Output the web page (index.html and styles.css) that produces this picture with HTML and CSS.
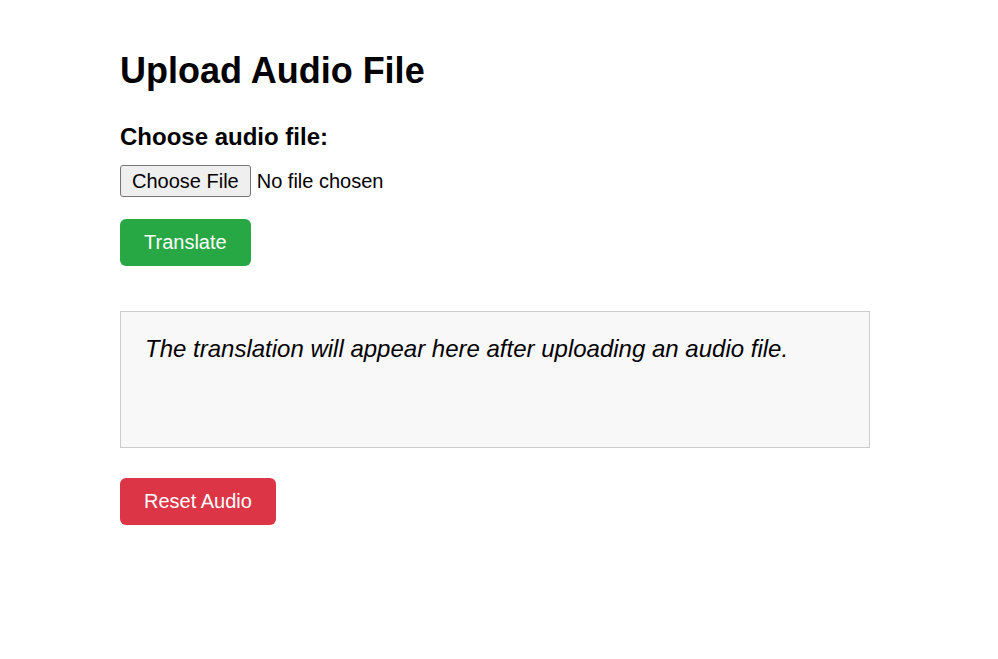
FILE: index.html
```html
<!DOCTYPE html>
<html lang="en">
<head>
<meta charset="utf-8">
<title>Upload Audio File</title>
<link rel="stylesheet" href="styles.css">
</head>
<body>
<main class="page">
  <h1 class="title">Upload Audio File</h1>
  <form class="upload-form">
    <label class="field-label" for="audio">Choose audio file:</label>
    <input class="file-input" type="file" id="audio" accept="audio/*">
    <button class="btn btn-translate" type="button">Translate</button>
  </form>
  <div class="result">
    <p class="result-text">The translation will appear here after uploading an audio file.</p>
  </div>
  <button class="btn btn-reset" type="button">Reset Audio</button>
</main>
</body>
</html>
```

FILE: styles.css
```css
html, body {
  margin: 0;
  padding: 0;
  background: #ffffff;
}

body {
  font-family: "Liberation Sans", Arial, sans-serif;
  font-size: 20px;
  color: #000;
}

.page {
  display: flex;
  flex-direction: column;
  align-items: flex-start;
  padding: 50px 120px 0;
}

.title {
  margin: 0;
  font-size: 36px;
  line-height: 41px;
  font-weight: bold;
}

.upload-form {
  display: flex;
  flex-direction: column;
  align-items: flex-start;
  margin-top: 32px;
}

.field-label {
  font-size: 24px;
  line-height: 28px;
  font-weight: bold;
}

.file-input {
  margin-top: 14px;
  font-family: "Liberation Sans", Arial, sans-serif;
  font-size: 20px;
  line-height: 24px;
}

.file-input::file-selector-button {
  font-family: "Liberation Sans", Arial, sans-serif;
  font-size: 20px;
  line-height: 24px;
  padding: 3px 11px;
  margin-right: 6px;
  border: 1px solid #767676;
  border-radius: 3px;
  background: #efefef;
  color: #000;
}

.btn {
  font-family: "Liberation Sans", Arial, sans-serif;
  font-size: 20px;
  line-height: 23px;
  color: #fff;
  border: none;
  border-radius: 6px;
  padding: 12px 24px;
  cursor: pointer;
}

.btn-translate {
  margin-top: 22px;
  background: #28a745;
}

.btn-reset {
  margin-top: 30px;
  background: #dc3545;
}

.result {
  box-sizing: border-box;
  width: 750px;
  height: 137px;
  margin-top: 45px;
  padding: 23px 24px 24px;
  border: 1px solid #cccccc;
  background: #f8f8f8;
}

.result-text {
  margin: 0;
  font-size: 24px;
  line-height: 28px;
  font-style: italic;
}
```
